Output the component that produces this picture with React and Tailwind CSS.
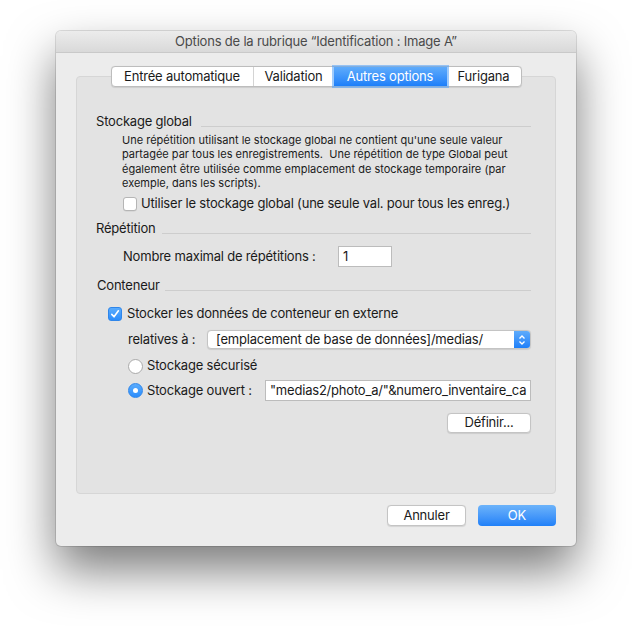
import React from "react";

const font = { fontFamily: "Inter, 'Noto Sans', 'Liberation Sans', sans-serif" };

function Header({ children, lineLeft }) {
  return (
    <div className="flex h-4 items-center">
      <span className="text-[13px] leading-4 tracking-[-0.2px] text-[#1a1a1a] whitespace-nowrap">{children}</span>
      <div className={`h-px flex-1 self-end mb-[2px] bg-[#cdcdcd] ${lineLeft}`} />
    </div>
  );
}

function Checkbox({ checked }) {
  return checked ? (
    <div className="flex h-[14px] w-[14px] items-center justify-center rounded-[3px] bg-gradient-to-b from-[#5aacfd] to-[#2a8cfb] border border-[#2f86ea]">
      <svg width="10" height="10" viewBox="0 0 10 10">
        <path d="M1.8 5.4 L4 7.8 L8.4 1.8" fill="none" stroke="white" strokeWidth="1.6" strokeLinecap="round" strokeLinejoin="round" />
      </svg>
    </div>
  ) : (
    <div className="h-[14px] w-[14px] rounded-[3px] border border-[#b5b5b5] bg-white shadow-[0_0.5px_0.5px_rgba(0,0,0,0.1)]" />
  );
}

function Radio({ checked }) {
  return checked ? (
    <div className="flex h-[15px] w-[15px] items-center justify-center rounded-full bg-gradient-to-b from-[#5aacfd] to-[#2a8cfb] border border-[#2f86ea]">
      <div className="h-[5px] w-[5px] rounded-full bg-white" />
    </div>
  ) : (
    <div className="h-[15px] w-[15px] rounded-full border border-[#a9a9a9] bg-white" />
  );
}

export default function App() {
  return (
    <div className="h-[626px] w-[632px] bg-white pl-[56px] pt-[31px] tracking-[-0.2px]" style={font}>
      <div className="flex h-[515px] w-[520px] flex-col overflow-hidden rounded-[5px] bg-[#ececec] shadow-[0_24px_48px_rgba(0,0,0,0.52),0_0_0_1px_rgba(0,0,0,0.12)]">
        {/* title bar */}
        <div className="flex h-[22px] shrink-0 items-center justify-center border-b border-[#c9c9c9] bg-gradient-to-b from-[#ececec] to-[#d9d9d9]">
          <span className="text-[13px] text-[#4a4a4a]">Options de la rubrique “Identification : Image A”</span>
        </div>

        <div className="flex flex-1 flex-col px-[20px] pt-[13px]">
          {/* tabs */}
          <div className="relative z-10 flex justify-center">
            <div className="flex h-[21px] rounded-[4px] border border-[#bdbdbd] bg-white text-[13px] text-[#1a1a1a] shadow-[0_0.5px_1px_rgba(0,0,0,0.1)]">
              <div className="flex w-[142px] items-center justify-center border-r border-[#d4d4d4]">Entrée automatique</div>
              <div className="flex w-[80px] items-center justify-center">Validation</div>
              <div className="flex w-[113px] items-center justify-center bg-gradient-to-b from-[#5eabfb] to-[#1c7ff9] text-white shadow-[0_0_0_2px_rgba(80,160,250,0.55)]">Autres options</div>
              <div className="flex w-[74px] items-center justify-center">Furigana</div>
            </div>
          </div>

          {/* panel */}
          <div className="mt-[-11px] flex h-[418px] flex-col rounded-[4px] border border-[#d6d6d6] bg-[#e3e3e3] pl-[19px] pr-[24px] pt-[36px]">
            <Header lineLeft="ml-[9px]">Stockage global</Header>
            <div className="mt-[4px] pl-[26px] text-[11px] leading-[14.3px] tracking-normal text-[#1a1a1a] whitespace-nowrap">
              <div>Une répétition utilisant le stockage global ne contient qu'une seule valeur</div>
              <div>partagée par tous les enregistrements.&nbsp; Une répétition de type Global peut</div>
              <div>également être utilisée comme emplacement de stockage temporaire (par</div>
              <div>exemple, dans les scripts).</div>
            </div>
            <div className="mt-[6px] flex h-4 items-center pl-[27px]">
              <Checkbox />
              <span className="ml-[4px] text-[13px] text-[#1a1a1a]">Utiliser le stockage global (une seule val. pour tous les enreg.)</span>
            </div>

            <div className="mt-[8px]">
              <Header lineLeft="ml-[6px]">Répétition</Header>
            </div>
            <div className="mt-[10px] flex h-[21px] items-center pl-[27px]">
              <span className="w-[215px] text-[13px] text-[#1a1a1a]">Nombre maximal de répétitions :</span>
              <div className="flex h-[21px] w-[54px] items-center border border-[#bcbcbc] bg-white pl-[4px] text-[13px] text-[#1a1a1a]">1</div>
            </div>

            <div className="mt-[10px] pl-[1px]">
              <Header lineLeft="ml-[5px]">Conteneur</Header>
            </div>
            <div className="mt-[13px] flex h-4 items-center pl-[12px]">
              <Checkbox checked />
              <span className="ml-[5px] text-[13px] text-[#1a1a1a]">Stocker les données de conteneur en externe</span>
            </div>
            <div className="mt-[8px] flex h-[19px] items-center pl-[32px]">
              <span className="w-[79px] text-[13px] text-[#1a1a1a]">relatives à :</span>
              <div className="flex h-[19px] flex-1 items-center overflow-hidden rounded-[4px] border border-[#c4c4c4] bg-white shadow-[0_0.5px_1px_rgba(0,0,0,0.1)]">
                <span className="flex-1 pl-[8px] text-[13px] text-[#1a1a1a]">[emplacement de base de données]/medias/</span>
                <div className="flex h-full w-[16px] items-center justify-center bg-gradient-to-b from-[#5eabfb] to-[#1c7ff9]">
                  <svg width="8" height="12" viewBox="0 0 8 12">
                    <path d="M1.5 4.5 L4 2 L6.5 4.5 M1.5 7.5 L4 10 L6.5 7.5" fill="none" stroke="white" strokeWidth="1.3" />
                  </svg>
                </div>
              </div>
            </div>
            <div className="mt-[9px] flex h-4 items-center pl-[32px]">
              <Radio />
              <span className="ml-[4px] text-[13px] text-[#1a1a1a]">Stockage sécurisé</span>
            </div>
            <div className="mt-[6px] flex h-[21px] items-center pl-[32px]">
              <Radio checked />
              <span className="ml-[4px] w-[118px] text-[13px] text-[#1a1a1a]">Stockage ouvert :</span>
              <div className="flex h-[21px] flex-1 items-center overflow-hidden border border-[#bcbcbc] bg-white pl-[4px] text-[13px] text-[#1a1a1a] whitespace-nowrap">
                "medias2/photo_a/"&amp;numero_inventaire_ca
              </div>
            </div>
            <div className="mt-[12px] flex justify-end">
              <div className="flex h-[20px] w-[84px] items-center justify-center rounded-[4px] border border-[#c4c4c4] bg-white text-[13px] text-[#1a1a1a] shadow-[0_0.5px_1px_rgba(0,0,0,0.1)]">
                Définir...
              </div>
            </div>
          </div>

          {/* bottom buttons */}
          <div className="mt-[11px] flex justify-end gap-[12px]">
            <div className="flex h-[21px] w-[79px] items-center justify-center rounded-[4px] border border-[#c4c4c4] bg-white text-[13px] text-[#1a1a1a] shadow-[0_0.5px_1px_rgba(0,0,0,0.1)]">
              Annuler
            </div>
            <div className="flex h-[21px] w-[78px] items-center justify-center rounded-[4px] bg-gradient-to-b from-[#6cb3fa] to-[#1f80f8] text-[13px] text-white">
              OK
            </div>
          </div>
        </div>
      </div>
    </div>
  );
}
